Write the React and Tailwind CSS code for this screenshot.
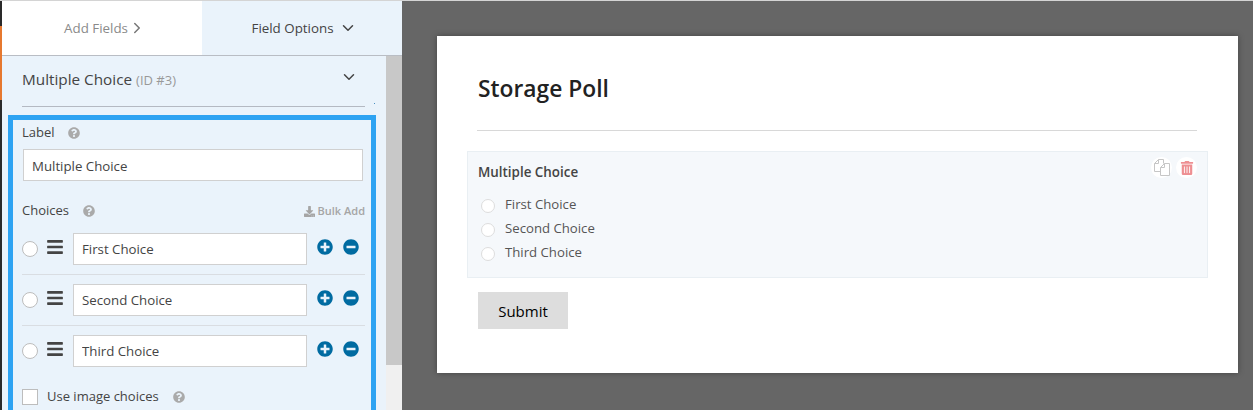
import React from 'react';
import { ChevronDown, ChevronRight } from 'lucide-react';
import {
    FaBars,
    FaDownload,
    FaMinusCircle,
    FaPlusCircle,
    FaQuestionCircle,
    FaTrashAlt,
} from 'react-icons/fa';

const choices = ['First Choice', 'Second Choice', 'Third Choice'];

function CopyIcon() {
    return (
        <svg width="16" height="17" viewBox="0 0 16 17" fill="none" stroke="#c6c6c6" strokeWidth="1">
            <path d="M4.5.5H9.5V4.5M4.5.5L.5 4.5V12.5H6" />
            <path d="M4.5.5V4.5H.5" />
            <path d="M10.5 4.5L6.5 8.5V16.5H15.5V4.5Z" />
            <path d="M10.5 4.5V8.5H6.5" />
        </svg>
    );
}

function ChoiceRow({ label, last }) {
    return (
        <div className={`flex h-[51px] w-[343px] items-start pt-[9px] ${last ? '' : 'border-b border-[#d9dde2]'}`}>
            <span className="mt-[8px] h-4 w-4 shrink-0 rounded-full border border-[#bdbdbd] bg-white" />
            <FaBars className="ml-[9px] mt-[5px] h-[18px] w-4 shrink-0 text-[#444]" />
            <input
                readOnly
                value={label}
                className="ml-[10px] h-[32px] w-[234px] shrink-0 border border-[#d0d0d0] bg-white pl-2 text-[13.25px] text-[#444] outline-none"
            />
            <FaPlusCircle className="ml-[10px] mt-[6px] shrink-0 text-[#006ba1]" size={16} />
            <FaMinusCircle className="ml-[10px] mt-[6px] shrink-0 text-[#006ba1]" size={16} />
        </div>
    );
}

function FieldOptions() {
    return (
        <div className="flex min-h-0 flex-1 bg-[#eaf3fb]">
            <div className="w-[384px] shrink-0 overflow-hidden">
                <div className="relative ml-[20px] flex h-[51px] w-[343px] items-center justify-between border-b border-[#b4b9c2] pb-[4px] pr-[11px]">
                    <span className="text-[15.3px] text-[#444]">
                        Multiple Choice <span className="text-[13px] text-[#999]">(ID #3)</span>
                    </span>
                    <ChevronDown className="-mr-[4px] mb-[4px] text-[#444]" size={18} strokeWidth={2} />
                    <span className="absolute -right-[10px] bottom-[2px] h-px w-px bg-[#4a90c2]" />
                </div>
                <div className="ml-[6px] mt-[8px] h-[320px] w-[368px] border-[5px] border-[#2ea3f2] pl-[9px] pt-[3px] text-[13px] text-[#444]">
                    <div className="flex h-[20px] items-center gap-[13px]">
                        <span>Label</span>
                        <FaQuestionCircle className="text-[#aaa]" size={12} />
                    </div>
                    <input
                        readOnly
                        value="Multiple Choice"
                        className="ml-px mt-[6px] block h-[32px] w-[340px] border border-[#d0d0d0] bg-white pl-2 pt-px text-[13.25px] text-[#444] outline-none"
                    />
                    <div className="mt-[20px] flex h-[20px] w-[343px] items-center">
                        <span>Choices</span>
                        <FaQuestionCircle className="ml-[14px] text-[#aaa]" size={12} />
                        <span className="ml-auto flex items-center gap-[3px] text-[11px] font-semibold text-[#a5a5a5]">
                            <FaDownload size={11} />
                            Bulk Add
                        </span>
                    </div>
                    <div className="mt-[3px]">
                        {choices.map((c, i) => (
                            <ChoiceRow key={c} label={c} last={i === choices.length - 1} />
                        ))}
                    </div>
                    <div className="mt-[12px] flex h-[16px] items-center">
                        <span className="h-4 w-4 shrink-0 border border-[#bdbdbd] bg-white" />
                        <span className="ml-[9px]">Use image choices</span>
                        <FaQuestionCircle className="ml-[14px] text-[#aaa]" size={12} />
                    </div>
                </div>
            </div>
            <div className="flex w-[16px] shrink-0 flex-col bg-[#f0f0f0]">
                <div className="h-[309px] bg-[#c8c8c8]" />
            </div>
        </div>
    );
}

function Sidebar() {
    return (
        <div className="flex w-[400px] shrink-0 flex-col bg-white">
            <div className="flex h-[55px] shrink-0 border-b border-[#b9bdc4] text-[13.35px]">
                <div className="flex w-[200px] items-center justify-center text-[#8a8a8a]">
                    Add Fields
                    <ChevronRight className="-mr-[6px] text-[#777]" size={18} strokeWidth={2} />
                </div>
                <div className="flex w-[200px] items-center justify-center gap-[9px] bg-[#eaf3fb] text-[#444]">
                    Field Options
                    <ChevronDown className="-mx-[4px] text-[#444]" size={18} strokeWidth={2} />
                </div>
            </div>
            <FieldOptions />
        </div>
    );
}

function Preview() {
    return (
        <div className="min-w-0 flex-1 bg-[#666666] pl-[35px] pt-[35px]">
            <div className="h-[337px] w-[801px] bg-white pl-[30px] pt-[35px] shadow-[0_0_6px_rgba(0,0,0,0.35)]">
                <h1 className="pl-[11px] text-[22.8px] font-semibold leading-[36px] text-[#222]">Storage Poll</h1>
                <div className="ml-[10px] mt-[23px] h-px w-[720px] bg-[#d8d8d8]" />
                <div className="relative mt-[20px] h-[127px] w-[741px] border border-[#e9eff3] bg-[#f5f8fb] pl-[10px] pt-[10px]">
                    <div className="flex h-[20px] items-center text-[13.4px] font-semibold text-[#444]">Multiple Choice</div>
                    <div className="mt-[11px] flex flex-col pl-[3px]">
                        {choices.map((c) => (
                            <div key={c} className="flex h-[24px] items-center text-[13.2px] text-[#555]">
                                <span className="mt-[2px] h-[14px] w-[14px] rounded-full border border-[#ddd] bg-white" />
                                <span className="ml-[10px]">{c}</span>
                            </div>
                        ))}
                    </div>
                    <div className="absolute right-[10px] top-[5px] flex items-center gap-[4px]">
                        <span className="flex h-[21px] w-[21px] items-center justify-center rounded-full bg-white">
                            <CopyIcon />
                        </span>
                        <span className="flex h-[21px] w-[21px] items-center justify-center rounded-full bg-white">
                            <FaTrashAlt className="text-[#ee8f92]" size={14} />
                        </span>
                    </div>
                </div>
                <button
                    type="button"
                    className="ml-[11px] mt-[14px] block h-[37px] w-[90px] bg-[#dddddd] pt-px text-[15px] text-black"
                >
                    Submit
                </button>
            </div>
        </div>
    );
}

export default function App() {
    return (
        <div className="flex h-[410px] w-[1253px] flex-col overflow-hidden bg-[#666666] font-['Open_Sans',sans-serif]">
            <div className="h-px shrink-0 bg-[#d4d4d4]" />
            <div className="flex min-h-0 flex-1">
                <div className="flex w-[2px] shrink-0 flex-col bg-[#2a2a2a]">
                    <div className="h-[25px] shrink-0" />
                    <div className="h-[74px] shrink-0 bg-[#e6782f]" />
                </div>
                <Sidebar />
                <Preview />
            </div>
        </div>
    );
}
